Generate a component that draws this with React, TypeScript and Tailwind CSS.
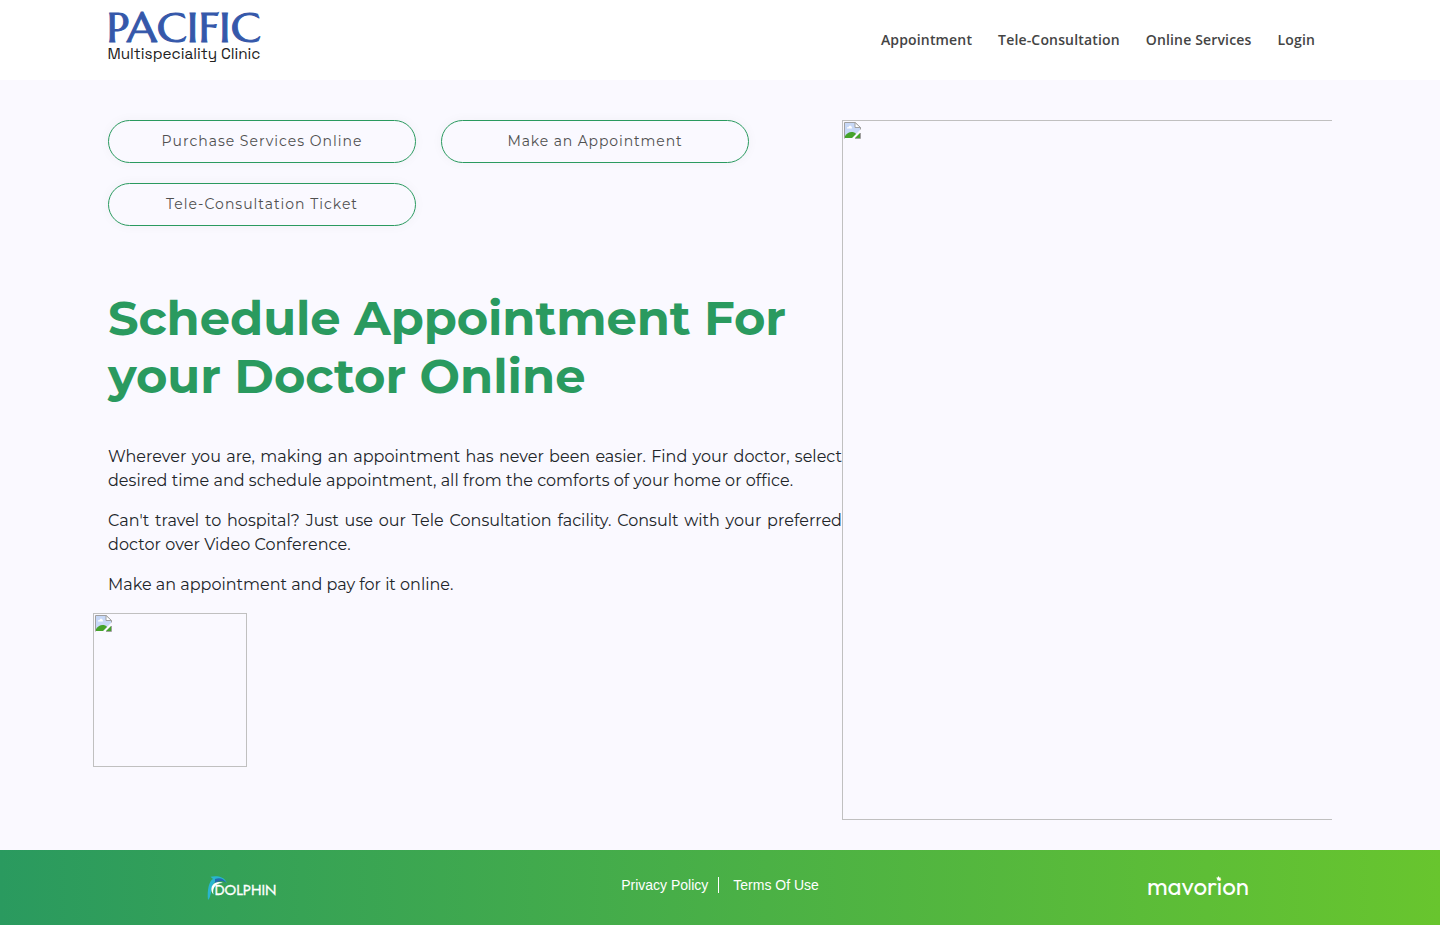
import React from "react";

const navItems = ["Appointment", "Tele-Consultation", "Online Services", "Login"];

function BrokenImage({ className }: { className: string }) {
  return (
    <div className={`border-[#c0c0c0] p-px ${className}`}>
      <svg width="17" height="17" viewBox="0 0 17 17" className="block">
        <path d="M.5 16.500V.5h10.500l5.500 5v2" fill="none" stroke="#a0a0a0" />
        <path d="M1 1h10l5 5v2L8 16H1z" fill="#c7d8f7" />
        <path d="M11 .5v5h5.500z" fill="#fff" stroke="#a0a0a0" />
        <path d="M3 6.500V5.200h1.300l1-1.400h1.600l1 1.400v1.300z" fill="#fff" />
        <path d="M1 16v-2c2-2.500 4-4 6.500-4 2 0 3.500.5 4.500 2l-4 4z" fill="#45a32b" />
        <path d="M16.500 11v5.500H11" fill="none" stroke="#a0a0a0" />
        <path d="M16 11v5h-5z" fill="#45a32b" />
      </svg>
    </div>
  );
}

function PillButton({ label, tracking = "tracking-[1px]" }: { label: string; tracking?: string }) {
  return (
    <button className="flex h-[43px] w-[308px] items-center justify-center rounded-full border border-[#2a9a5f] pb-0.5 text-sm text-[#505050] shadow-[0_0_12px_rgba(0,0,0,0.04)]">
      <span className={`whitespace-nowrap ${tracking}`}>{label}</span>
    </button>
  );
}

export default function App() {
  return (
    <div className="flex h-[925px] w-[1440px] flex-col overflow-hidden bg-[#faf9ff] font-['Montserrat','Inter',sans-serif]">
      <header className="flex h-20 shrink-0 items-center justify-between bg-white pr-[125px] pl-[107px]">
        <svg width="160" height="80" viewBox="0 0 160 80" className="block overflow-visible">
          <text x="-0.500" y="41.800" fontFamily="Marcellus, 'Bellota', 'Cormorant Garamond', 'Playfair Display', 'Liberation Serif'" fontSize="41.500" fill="#3558aa" stroke="#3558aa" strokeWidth="1" textLength="154" lengthAdjust="spacingAndGlyphs">PACIFIC</text>
          <text x="0.500" y="59" fontFamily="'Space Grotesk', Inter" fontSize="15" fill="#222" textLength="153" lengthAdjust="spacingAndGlyphs">Multispeciality Clinic</text>
        </svg>
        <nav className="flex gap-[26px] font-['Open_Sans',sans-serif] text-sm font-semibold tracking-[0.16px] text-[#444]">
          {navItems.map((item) => <a key={item}>{item}</a>)}
        </nav>
      </header>
      <main className="flex h-[770px] shrink-0 pt-10 pr-[108px] pl-[108px]">
        <section className="w-[734px] shrink-0">
          <div className="flex flex-wrap gap-x-[25px] gap-y-5">
            <PillButton label="Purchase Services Online" />
            <PillButton label="Make an Appointment" tracking="tracking-[0.88px]" />
            <PillButton label="Tele-Consultation Ticket" />
          </div>
          <h1 className="mt-[63px] text-[48px] leading-[58px] font-bold whitespace-nowrap text-[#2a9a5f]">
            <span className="block tracking-[-0.11px]">Schedule Appointment For</span>
            <span className="block tracking-[-0.06px]">your Doctor Online</span>
          </h1>
          <div className="mt-10 flex flex-col gap-4 text-base text-[#212529]">
            <p>
              <span className="block tracking-[0.02px] whitespace-nowrap [text-align-last:justify]">Wherever you are, making an appointment has never been easier. Find your doctor, select</span>
              <span className="block tracking-[0.02px] whitespace-nowrap">desired time and schedule appointment, all from the comforts of your home or office.</span>
            </p>
            <p>
              <span className="block tracking-[0.02px] whitespace-nowrap [text-align-last:justify]">Can't travel to hospital? Just use our Tele Consultation facility. Consult with your preferred</span>
              <span className="block tracking-[0.07px] whitespace-nowrap">doctor over Video Conference.</span>
            </p>
            <p>Make an appointment and pay for it online.</p>
          </div>
          <BrokenImage className="mt-4 -ml-[15px] h-[154px] w-[154px] border" />
        </section>
        <BrokenImage className="h-[700px] w-[490px] border-y border-l" />
      </main>
      <footer className="flex h-[75px] shrink-0 items-center justify-between bg-[linear-gradient(to_right,#2a9a5f,#68c52e)] pr-48 pl-[207px]">
        <svg width="72" height="30" viewBox="0 0 72 30" className="block overflow-visible">
          <path d="M1 27C0 17 2 8 6 6L3.500 3.800C9 2.500 17 3 20 10c-4-4-9-4-12-1-3 3-4 7-4 11-1 3-1 5-3 7z" fill="#29b5cf" />
          <path d="M8 6c5-2 9 0 11.500 4-5-3.500-8.500-2-11.500 1z" fill="#2469ae" />
          <path d="M6.500 21.500C3 18 4 12 8 10c3-1.500 6-1 8 0-7-.5-11 5-9.500 11.500z" fill="#fff" />
          <text x="7.500" y="21.500" fontFamily="Jost, Outfit, Lato" fontSize="15.500" fill="#fff" stroke="#fff" strokeWidth="0.300" textLength="62" lengthAdjust="spacingAndGlyphs">DOLPHIN</text>
        </svg>
        <div className="mb-[5px] ml-[14px] flex items-center font-['Liberation_Sans',sans-serif] text-sm leading-4 text-white">
          <a className="border-r border-white pr-[10px]">Privacy Policy</a>
          <a className="pl-[14px]">Terms Of Use</a>
        </div>
        <svg width="101" height="30" viewBox="0 0 101 30" className="block overflow-visible">
          <text x="0" y="22.200" fontFamily="Outfit, Urbanist, Quicksand, Jost, Montserrat" fontSize="24.500" fontWeight="400" fill="#fff" textLength="102" lengthAdjust="spacingAndGlyphs">mavorion</text>
          <path d="M71.500 3l.8 1.500 1.700.2-1.200 1.200.3 1.700-1.600-.8-1.500.8.300-1.700L69 4.700l1.700-.2z" fill="#fff" />
        </svg>
      </footer>
    </div>
  );
}
